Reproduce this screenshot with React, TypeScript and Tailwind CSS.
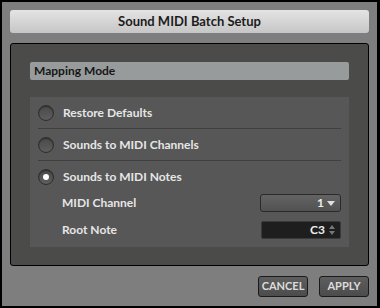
const font = { fontFamily: 'Lato, "Open Sans", sans-serif' };

function Radio({ checked }: { checked?: boolean }) {
  return (
    <div className="w-4 h-4 rounded-full border border-[#2e2e2e] bg-gradient-to-b from-[#4a4a4a] to-[#5e5e5e] shadow-[inset_0_1px_1px_rgba(0,0,0,0.4)] flex items-center justify-center">
      {checked && <div className="w-[6px] h-[6px] rounded-full bg-white" />}
    </div>
  );
}

function OptionRow({ label, checked, divider }: { label: string; checked?: boolean; divider?: boolean }) {
  return (
    <div className={`h-8 flex items-center gap-[9px] mx-[8px] ${divider ? 'border-b border-[#3f3f3f]' : ''}`}>
      <Radio checked={checked} />
      <span className="text-[12px] font-bold text-[#e6e6e6]">{label}</span>
    </div>
  );
}

export default function App() {
  return (
    <div style={font} className="w-[380px] h-[308px] bg-black p-[2px] pr-[3px]">
      <div className="w-full h-full bg-[#7e7e7e] flex flex-col px-[8px] pt-[8px]">
        {/* Title */}
        <div className="h-[23px] rounded-[3px] bg-gradient-to-b from-[#e4e4e4] to-[#c6c6c6] flex items-center justify-center">
          <span className="text-[13px] font-bold text-[#1c1c1c]">Sound MIDI Batch Setup</span>
        </div>

        {/* Panel */}
        <div className="mt-[10px] h-[223px] border border-black rounded-[3px] bg-[#4b4b4a] px-[19px] pt-[18px]">
          <div className="h-[18px] rounded-[2px] bg-[#979b9b] flex items-center px-[4px]">
            <span className="text-[12px] font-bold text-[#161616]">Mapping Mode</span>
          </div>

          <div className="mt-[17px] h-[150px] bg-[#575757] flex flex-col">
            <OptionRow label="Restore Defaults" divider />
            <OptionRow label="Sounds to MIDI Channels" divider />
            <OptionRow label="Sounds to MIDI Notes" checked />

            <div className="h-[20px] flex items-center justify-between pl-[32px] pr-[8px]">
              <span className="text-[12px] font-bold text-[#e6e6e6]">MIDI Channel</span>
              <div className="w-[81px] h-[18px] rounded-[3px] border border-[#2a2a2a] bg-gradient-to-b from-[#636363] to-[#525252] flex items-center justify-end pr-[5px] gap-[3px]">
                <span className="text-[12px] font-bold text-[#eeeeee]">1</span>
                <svg width="8" height="5" viewBox="0 0 8 5"><path d="M0 0 L8 0 L4 5 Z" fill="#e0e0e0" /></svg>
              </div>
            </div>

            <div className="mt-[7px] h-[20px] flex items-center justify-between pl-[32px] pr-[8px]">
              <span className="text-[12px] font-bold text-[#e6e6e6]">Root Note</span>
              <div className="w-[80px] h-[18px] rounded-[2px] border border-[#3a3a3a] bg-[#1e1e1e] flex items-center justify-end pr-[5px] gap-[4px]">
                <span className="text-[12px] font-bold text-[#eeeeee]">C3</span>
                <svg width="6" height="10" viewBox="0 0 6 10">
                  <path d="M0 4 L6 4 L3 0 Z" fill="#777" />
                  <path d="M0 6 L6 6 L3 10 Z" fill="#777" />
                </svg>
              </div>
            </div>
          </div>
        </div>

        {/* Buttons */}
        <div className="flex justify-end gap-[11px] mt-[10px]">
          <button className="w-[50px] h-[21px] rounded-[3px] border border-[#1a1a1a] bg-gradient-to-b from-[#5e5e5e] to-[#4c4c4c] text-[11px] font-bold text-[#dcdcdc]">CANCEL</button>
          <button className="w-[50px] h-[21px] rounded-[3px] border border-[#1a1a1a] bg-gradient-to-b from-[#5e5e5e] to-[#4c4c4c] text-[11px] font-bold text-[#dcdcdc]">APPLY</button>
        </div>
      </div>
    </div>
  );
}
